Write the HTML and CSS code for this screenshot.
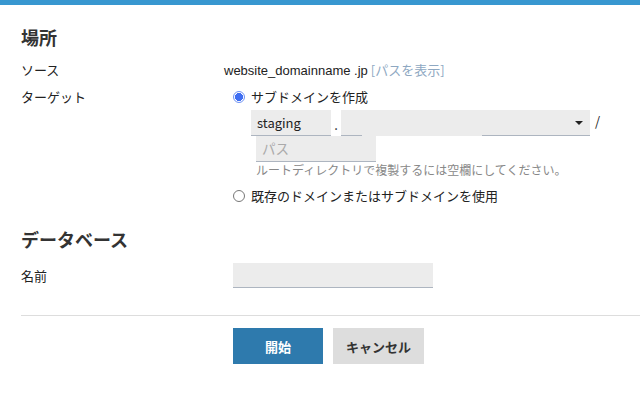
FILE: index.html
```html
<!DOCTYPE html>
<html lang="ja">
<head>
  <meta charset="utf-8">
  <title>ステージング作成</title>
  <link rel="stylesheet" href="styles.css">
</head>
<body>
  <div class="topbar"></div>
  <div id="container">
    <h2 class="section-title">場所</h2>

    <div class="row">
      <div class="label">ソース</div>
      <div class="value source"><span class="domain">website_domainname .jp</span> <a class="show-path" href="#">[パスを表示]</a></div>
    </div>

    <div class="row">
      <div class="label">ターゲット</div>
      <div class="value options">
        <div class="option">
          <span class="radio checked"></span>
          <span>サブドメインを作成</span>
        </div>
        <div class="subdomain">
          <div class="field staging">staging</div>
          <span class="dot">.</span>
          <div class="field domain-select"><span class="caret"></span></div>
          <span class="slash">/</span>
        </div>
        <div class="path-block">
          <div class="field path">パス</div>
          <div class="hint">ルートディレクトリで複製するには空欄にしてください。</div>
        </div>
        <div class="option second">
          <span class="radio"></span>
          <span>既存のドメインまたはサブドメインを使用</span>
        </div>
      </div>
    </div>

    <h2 class="section-title db">データベース</h2>

    <div class="row name-row">
      <div class="label">名前</div>
      <div class="value">
        <div class="field db-name"></div>
      </div>
    </div>

    <hr class="divider">

    <div class="actions">
      <button class="btn primary">開始</button>
      <button class="btn">キャンセル</button>
    </div>
  </div>
</body>
</html>
```

FILE: styles.css
```css
body {
  margin: 0;
  font-family: "Noto Sans CJK JP", "Noto Sans", sans-serif;
  font-size: 13px;
  color: #222;
  background: #fff;
}
.topbar {
  height: 5px;
  background-color: #3897d0;
}
#container {
  padding: 20px 0 0 21px;
}
.section-title {
  margin: 0 0 8px;
  font-size: 18px;
  line-height: 24px;
  font-weight: bold;
  color: #333;
}
.section-title.db {
  margin-top: 18px;
  margin-bottom: 12px;
}
.row {
  display: grid;
  grid-template-columns: 203px 1fr;
}
.label {
  line-height: 26px;
}
.value {
  line-height: 26px;
}
.source .domain {
  font-family: "Liberation Sans", "Noto Sans CJK JP", sans-serif;
  font-size: 13px;
}
.show-path {
  color: #8ea8c2;
  text-decoration: none;
}
.options {
  padding-left: 9px;
}
.option {
  display: flex;
  align-items: center;
  gap: 6px;
  height: 26px;
}
.option.second {
  margin-top: 5px;
}
.radio {
  width: 10px;
  height: 10px;
  border: 1px solid #777;
  border-radius: 50%;
  background: #fff;
  box-sizing: content-box;
}
.radio.checked {
  border-color: #6f93f5;
  background: radial-gradient(circle, #3f6ef2 0 3.8px, #fff 4.3px);
}
.subdomain {
  display: flex;
  align-items: flex-end;
  padding-left: 18px;
  height: 26px;
}
.field {
  box-sizing: border-box;
  height: 26px;
  background: #ececec;
  border-bottom: 1px solid #adb5c0;
  line-height: 25px;
  padding: 0 6px;
}
.staging {
  width: 80px;
}
.dot {
  width: 10px;
  text-align: center;
  line-height: 22px;
}
.domain-select {
  position: relative;
  width: 249px;
  border-bottom: none;
  background:
    linear-gradient(to right, #adb5c0 21px, transparent 21px, transparent 141px, #adb5c0 141px) bottom / 100% 1px no-repeat,
    #ececec;
}
.caret {
  position: absolute;
  right: 7px;
  top: 11px;
  border-left: 4px solid transparent;
  border-right: 4px solid transparent;
  border-top: 4px solid #222;
}
.slash {
  padding-left: 5px;
  line-height: 22px;
  align-self: flex-start;
}
.path-block {
  padding-left: 23px;
}
.path {
  width: 120px;
  color: #aaa;
  font-size: 13.5px;
}
.hint {
  font-size: 12px;
  line-height: 16px;
  color: #888;
}
.name-row .label {
  line-height: 25px;
}
.db-name {
  width: 200px;
  height: 25px;
  margin-left: 9px;
}
.divider {
  margin: 27px 0 0;
  border: none;
  border-top: 1px solid #ddd;
}
.actions {
  display: flex;
  gap: 10px;
  padding: 12px 0 0 212px;
}
.btn {
  width: 91px;
  height: 36px;
  border: none;
  background-color: #ddd;
  color: #333;
  font-family: inherit;
  font-size: 13px;
  font-weight: bold;
  cursor: pointer;
}
.btn.primary {
  width: 90px;
  background-color: #2e7aad;
  color: #fff;
}
```
